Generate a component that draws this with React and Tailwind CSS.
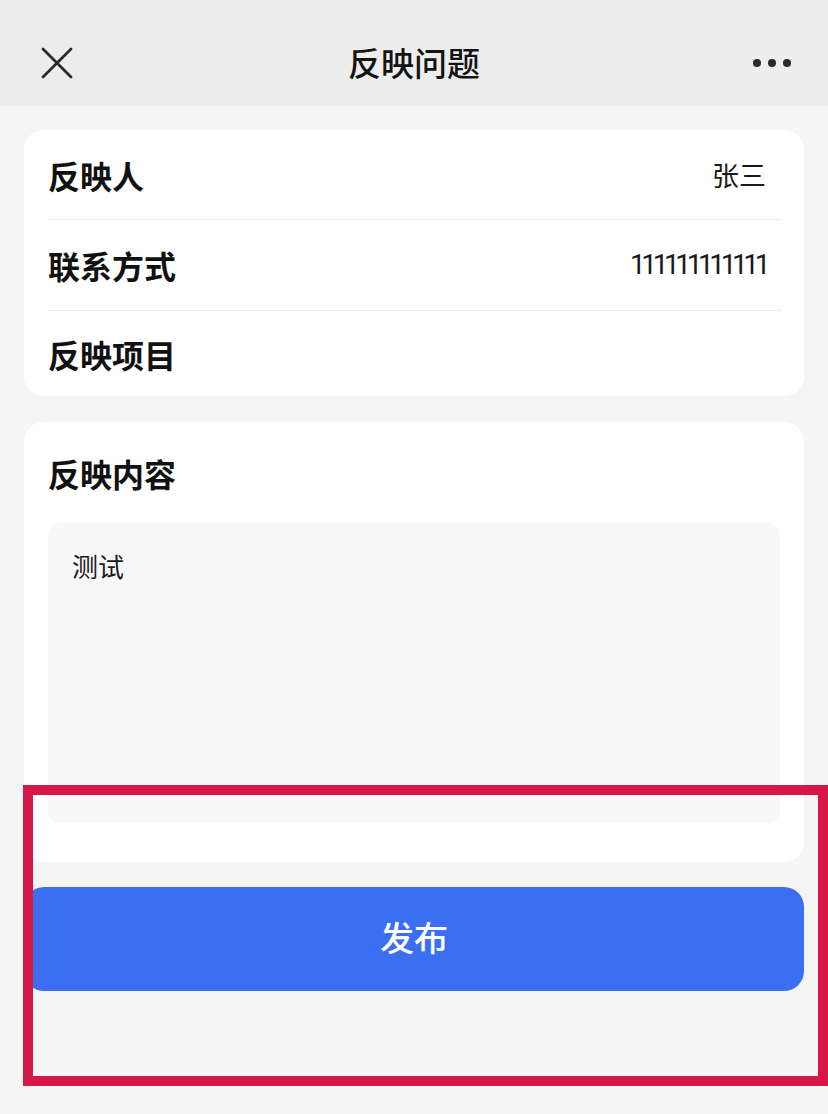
import React from "react";

const font = { fontFamily: '"Noto Sans CJK SC", "Noto Sans", sans-serif' };

export default function App() {
  return (
    <div
      className="relative min-h-[1114px] w-full bg-[#f5f5f5] text-[#111]"
      style={font}
    >
      {/* Header */}
      <div className="relative flex h-[106px] items-center justify-center bg-[#ededed] pt-[18px]">
        <svg
          className="absolute left-[41px] top-[47px]"
          width="32"
          height="32"
          viewBox="0 0 32 32"
        >
          <path
            d="M2 2 L30 30 M30 2 L2 30"
            stroke="#2a2a2a"
            strokeWidth="2.8"
            strokeLinecap="round"
          />
        </svg>
        <div className="text-[33px] font-medium leading-none text-[#141414]">
          反映问题
        </div>
        <div className="absolute left-[753px] top-[59px] flex gap-[7px]">
          <span className="h-[8px] w-[8px] rounded-full bg-[#2a2a2a]" />
          <span className="h-[8px] w-[8px] rounded-full bg-[#2a2a2a]" />
          <span className="h-[8px] w-[8px] rounded-full bg-[#2a2a2a]" />
        </div>
      </div>

      {/* Content */}
      <div className="flex flex-col px-[24px] pt-[24px]">
        {/* Card 1 */}
        <div className="rounded-[20px] bg-white pl-[24px] pr-[22px]">
          <div className="flex h-[90px] items-center justify-between border-b border-[#ebebeb]">
            <span className="text-[32px] font-semibold leading-none">反映人</span>
            <span className="mr-[16px] text-[27px] leading-none text-[#1a1a1a]">张三</span>
          </div>
          <div className="flex h-[91px] items-center justify-between border-b border-[#ebebeb]">
            <span className="text-[32px] font-semibold leading-none">联系方式</span>
            <span
              className="mr-[16px] text-[28px] leading-none tracking-[-4.4px] text-[#1a1a1a]"
              style={{ fontFamily: 'Roboto, "Noto Sans", sans-serif' }}
            >
              111111111111
            </span>
          </div>
          <div className="flex h-[85px] items-center justify-between">
            <span className="text-[32px] font-semibold leading-none">反映项目</span>
          </div>
        </div>

        {/* Card 2 */}
        <div className="mt-[26px] flex flex-col rounded-[20px] bg-white px-[24px] pb-[39px]">
          <div className="flex h-[101px] items-center">
            <span className="text-[32px] font-semibold leading-none">反映内容</span>
          </div>
          <div className="h-[300px] rounded-[12px] bg-[#f8f8f8] px-[24px] pt-[30px]">
            <span className="text-[26px] leading-none text-[#1a1a1a]">测试</span>
          </div>
        </div>

        {/* Button */}
        <button className="mt-[25px] flex h-[104px] items-center justify-center rounded-[20px] bg-[#3b6ef0] pb-[6px] text-[34px] font-medium text-white">
          发布
        </button>
      </div>

      {/* Red highlight overlay */}
      <div className="pointer-events-none absolute left-[23px] top-[785px] h-[301px] w-[805px] border-[10px] border-[#d51848]" />
    </div>
  );
}
